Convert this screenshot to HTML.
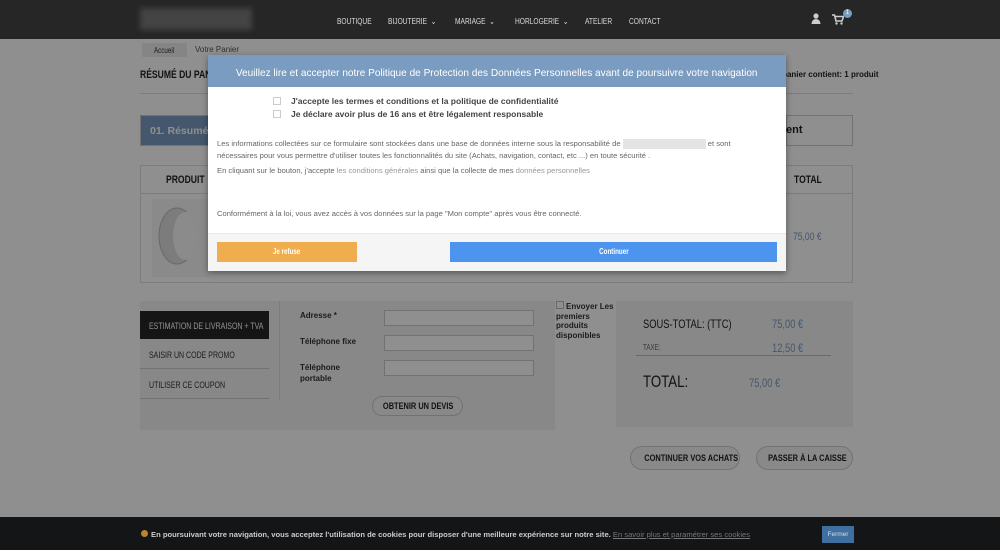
<!DOCTYPE html>
<html><head><meta charset="utf-8"><style>
*{box-sizing:border-box;margin:0;padding:0}
body{width:1000px;height:550px;overflow:hidden;background:#fff;font-family:"Liberation Sans",sans-serif;position:relative}
.n{transform:scaleX(.78);transform-origin:0 0;white-space:nowrap}
.c{display:inline-block;transform:scaleX(.78);white-space:nowrap}
.hdr{position:absolute;left:0;top:0;width:1000px;height:39px;background:#262626}
.logo{position:absolute;left:140px;top:8px;width:112px;height:22px;background:#444;filter:blur(3px)}
.nav{position:absolute;top:16px;font-size:8.5px;color:#ddd}
.page{position:absolute;left:0;top:39px;width:1000px;height:478px;background:#fff}
.abs{position:absolute}
.ov{position:absolute;left:0;top:39px;width:1000px;height:478px;background:rgba(0,0,0,.44)}
.modal{position:absolute;left:208px;top:55px;width:578px;height:216px;background:#fff;box-shadow:0 2px 6px rgba(0,0,0,.4)}
.mh{height:32px;background:#7a9cc0;color:#fff;font-size:10.5px;text-align:center;line-height:36px}
.cb{position:absolute;width:8px;height:8px;border:1px solid #ccc;background:#fff}
.mt{position:absolute;font-size:7.6px;color:#666}
.foot{position:absolute;left:0;top:517px;width:1000px;height:33px;background:#141517}
.inp{position:absolute;width:150px;height:16px;border:1px solid #ccc;background:#fff}
.btn{position:absolute;border:1px solid #ccc;border-radius:12px;background:#f4f4f4;font-size:9.5px;font-weight:bold;color:#222;text-align:center}
</style></head><body>
<div class="hdr">
<div class="logo"></div>
<div class="nav n" style="left:337px">BOUTIQUE</div>
<div class="nav n" style="left:388px">BIJOUTERIE &nbsp;⌄</div>
<div class="nav n" style="left:455px">MARIAGE &nbsp;⌄</div>
<div class="nav n" style="left:515px">HORLOGERIE &nbsp;⌄</div>
<div class="nav n" style="left:585px">ATELIER</div>
<div class="nav n" style="left:629px">CONTACT</div>
<svg class="abs" style="left:811px;top:13px" width="10" height="11"><circle cx="5" cy="3" r="2.6" fill="#ccc"/><path d="M0.5 11 Q1 6 5 6 Q9 6 9.5 11Z" fill="#ccc"/></svg>
<svg class="abs" style="left:832px;top:14px" width="12" height="11"><path d="M0 1H2.5L4 7H10L11.5 2.5H3" fill="none" stroke="#ccc" stroke-width="1.6"/><circle cx="4.5" cy="9.5" r="1.2" fill="#ccc"/><circle cx="9.5" cy="9.5" r="1.2" fill="#ccc"/></svg>
<div class="abs" style="left:843px;top:9px;width:9px;height:9px;border-radius:50%;background:#7a9cc0;color:#fff;font-size:6px;text-align:center;line-height:9px">1</div>
</div>
<div class="page">
<div class="abs" style="left:142px;top:4px;width:45px;height:14px;background:#eee"></div>
<div class="abs n" style="left:154px;top:7px;font-size:8px;color:#333">Accueil</div>
<div class="abs" style="left:195px;top:6px;font-size:8px;color:#555">Votre Panier</div>
<div class="abs n" style="left:140px;top:30px;font-size:11px;font-weight:bold;color:#222">RÉSUMÉ DU PANIER</div>
<div class="abs" style="left:760px;top:31px;font-size:8px;font-weight:bold;color:#222">Votre panier contient: 1 produit</div>
<div class="abs" style="left:140px;top:54px;width:713px;border-top:1px solid #ddd"></div>
<div class="abs" style="left:140px;top:76px;width:713px;height:31px;background:#7a9cc0;border:1px solid #ccc"></div>
<div class="abs" style="left:150px;top:86px;font-size:10.5px;font-weight:bold;color:#fff">01. Résumé</div>
<div class="abs" style="left:786px;top:76px;width:67px;height:31px;background:#fff;border:1px solid #ccc"></div>
<div class="abs" style="left:786px;top:85px;font-size:11px;font-weight:bold;color:#222">ent</div>
<div class="abs" style="left:140px;top:126px;width:713px;height:118px;border:1px solid #ddd;background:#fff"></div>
<div class="abs" style="left:140px;top:126px;width:713px;height:29px;background:#fff;border:1px solid #ddd"></div>
<div class="abs n" style="left:166px;top:135px;font-size:11px;font-weight:bold;color:#222">PRODUIT</div>
<div class="abs n" style="left:794px;top:135px;font-size:11px;font-weight:bold;color:#222">TOTAL</div>
<div class="abs" style="left:152px;top:160px;width:57px;height:78px;background:#f6f6f6"><svg width="57" height="78"><ellipse cx="25" cy="37" rx="18" ry="28" fill="#ddd" stroke="#bbb"/><ellipse cx="33" cy="37" rx="12" ry="24" fill="#f8f8f8"/></svg></div>
<div class="abs n" style="left:793px;top:192px;font-size:11px;color:#7a9cc0">75,00 €</div>
<div class="abs" style="left:140px;top:262px;width:415px;height:129px;background:#f2f2f2"></div>
<div class="abs" style="left:140px;top:272px;width:129px;height:28px;background:#262626"></div>
<div class="abs n" style="left:149px;top:282px;color:#fff;font-size:9px">ESTIMATION DE LIVRAISON + TVA</div>
<div class="abs n" style="left:149px;top:311px;font-size:9px;color:#333">SAISIR UN CODE PROMO</div>
<div class="abs" style="left:140px;top:329px;width:129px;border-top:1px solid #ccc"></div>
<div class="abs n" style="left:149px;top:341px;font-size:9px;color:#333">UTILISER CE COUPON</div>
<div class="abs" style="left:140px;top:359px;width:129px;border-top:1px solid #ccc"></div>
<div class="abs" style="left:279px;top:262px;height:100px;border-left:1px solid #ddd"></div>
<div class="abs" style="left:300px;top:272px;font-size:8px;font-weight:bold;color:#333">Adresse *</div>
<div class="abs" style="left:300px;top:298px;font-size:8px;font-weight:bold;color:#333">Téléphone fixe</div>
<div class="abs" style="left:300px;top:323px;font-size:8px;font-weight:bold;color:#333;line-height:11px">Téléphone<br>portable</div>
<div class="inp" style="left:384px;top:271px"></div>
<div class="inp" style="left:384px;top:296px"></div>
<div class="inp" style="left:384px;top:321px"></div>
<div class="btn" style="left:372px;top:357px;width:91px;height:20px;line-height:19px"><span class="c">OBTENIR UN DEVIS</span></div>
<div class="abs" style="left:556px;top:262px;width:60px;font-size:8px;font-weight:bold;color:#333;line-height:9.5px"><span style="display:inline-block;width:8px;height:8px;border:1px solid #bbb;background:#fff;margin-right:2px"></span>Envoyer Les premiers produits disponibles</div>
<div class="abs" style="left:616px;top:262px;width:237px;height:126px;background:#f2f2f2"></div>
<div class="abs n" style="left:643px;top:278px;font-size:12px;color:#222">SOUS-TOTAL: (TTC)</div>
<div class="abs n" style="left:772px;top:278px;font-size:12px;color:#7a9cc0">75,00 €</div>
<div class="abs n" style="left:643px;top:304px;font-size:8px;color:#666">TAXE:</div>
<div class="abs n" style="left:772px;top:302px;font-size:12px;color:#7a9cc0">12,50 €</div>
<div class="abs" style="left:636px;top:316px;width:195px;border-top:1px solid #bbb"></div>
<div class="abs n" style="left:643px;top:333px;font-size:17px;color:#222">TOTAL:</div>
<div class="abs n" style="left:749px;top:337px;font-size:12px;color:#7a9cc0">75,00 €</div>
<div class="btn" style="left:630px;top:407px;width:110px;height:24px;line-height:23px"><span class="c">CONTINUER VOS ACHATS</span></div>
<div class="btn" style="left:756px;top:407px;width:97px;height:24px;line-height:23px"><span class="c">PASSER À LA CAISSE</span></div>
</div>
<div class="ov"></div>
<div class="modal">
<div class="mh"><span style="display:inline-block;transform:scaleX(.96)">Veuillez lire et accepter notre Politique de Protection des Données Personnelles avant de poursuivre votre navigation</span></div>
<div class="cb" style="left:65px;top:42px"></div>
<div class="cb" style="left:65px;top:55px"></div>
<div class="abs" style="left:83px;top:41px;font-size:8.5px;font-weight:bold;color:#444">J'accepte les termes et conditions et la politique de confidentialité</div>
<div class="abs" style="left:83px;top:54px;font-size:8.5px;font-weight:bold;color:#444">Je déclare avoir plus de 16 ans et être légalement responsable</div>
<div class="mt" style="left:9px;top:83px;width:560px;line-height:12px">Les informations collectées sur ce formulaire sont stockées dans une base de données interne sous la responsabilité de <span style="display:inline-block;width:83px;height:10px;background:#e4e4e4;vertical-align:middle"></span> et sont<br>nécessaires pour vous permettre d'utiliser toutes les fonctionnalités du site (Achats, navigation, contact, etc ...) en toute sécurité .</div>
<div class="mt" style="left:9px;top:111px">En cliquant sur le bouton, j'accepte <span style="color:#999">les conditions générales</span> ainsi que la collecte de mes <span style="color:#999">données personnelles</span></div>
<div class="mt" style="left:9px;top:154px">Conformément à la loi, vous avez accès à vos données sur la page "Mon compte" après vous être connecté.</div>
<div class="abs" style="left:0;top:178px;width:578px;height:38px;background:#f5f5f5;border-top:1px solid #e8e8e8"></div>
<div class="abs" style="left:9px;top:187px;width:140px;height:20px;background:#f0ad4e;color:#fff;font-size:8px;font-weight:bold;text-align:center;line-height:20px"><span class="c">Je refuse</span></div>
<div class="abs" style="left:242px;top:187px;width:327px;height:20px;background:#4d94ef;color:#fff;font-size:8px;font-weight:bold;text-align:center;line-height:20px"><span class="c">Continuer</span></div>
</div>
<div class="foot">
<div class="abs" style="left:141px;top:13px;font-size:7.6px;font-weight:bold;color:#ccc;white-space:nowrap"><span style="display:inline-block;width:7px;height:7px;border-radius:50%;background:#b8862b;margin-right:3px"></span>En poursuivant votre navigation, vous acceptez l'utilisation de cookies pour disposer d'une meilleure expérience sur notre site. <span style="color:#777;text-decoration:underline;font-weight:normal">En savoir plus et paramétrer ses cookies</span></div>
<div class="abs" style="left:822px;top:9px;width:32px;height:17px;background:#3f6f9f;color:#ddd;font-size:6.5px;text-align:center;line-height:17px">Fermer</div>
</div>
</body></html>
